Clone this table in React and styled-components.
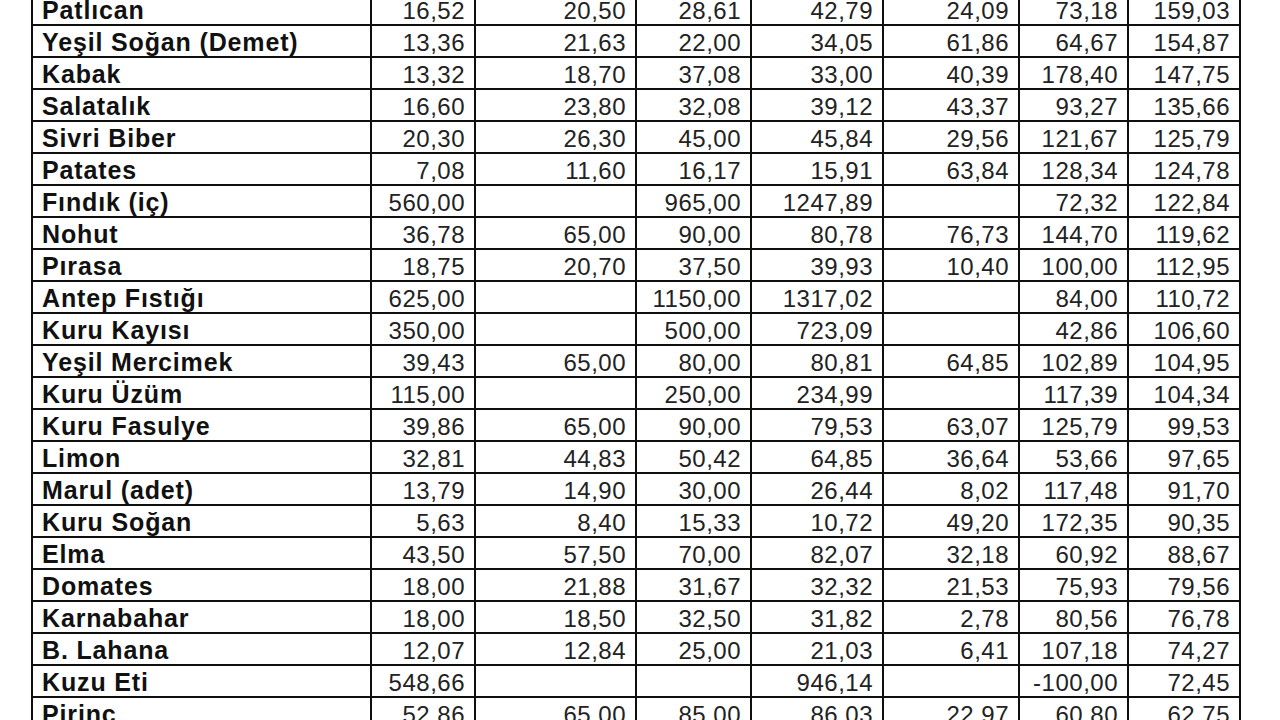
import React from "react";
import styled, { createGlobalStyle } from "styled-components";

const Global = createGlobalStyle`
  html, body { margin: 0; padding: 0; background: #ffffff; }
  body { font-family: "Liberation Sans", Arial, sans-serif; overflow: hidden; }
`;

const Page = styled.div`
  width: 1280px;
  height: 720px;
  overflow: hidden;
  background: #fff;
  padding-left: 31px;
  box-sizing: border-box;
`;

const Table = styled.table`
  margin-top: -8px;
  border-collapse: collapse;
  table-layout: fixed;
  width: 1210px;
  color: #1b1b1b;
`;

const Row = styled.tr`
  height: 32px;
`;

const Cell = styled.td`
  border: 2px solid #0f0f0f;
  padding: 3px 9px 0 9px;
  height: 27px;
  line-height: 27px;
  white-space: nowrap;
  overflow: hidden;
  box-sizing: content-box;
  font-family: "Liberation Sans", Arial, sans-serif;
  font-size: ${(p) => (p.$name ? "25px" : "24px")};
  font-weight: ${(p) => (p.$name ? 700 : 400)};
  letter-spacing: ${(p) => (p.$name ? "0.85px" : "0.5px")};
  text-align: ${(p) => (p.$name ? "left" : "right")};
  color: ${(p) => (p.$name ? "#111" : "#222")};
  vertical-align: top;
`;

const widths = [339, 104, 161, 115, 132, 136, 109, 112];

const rows = [
  ["Patlıcan", "16,52", "20,50", "28,61", "42,79", "24,09", "73,18", "159,03"],
  ["Yeşil Soğan (Demet)", "13,36", "21,63", "22,00", "34,05", "61,86", "64,67", "154,87"],
  ["Kabak", "13,32", "18,70", "37,08", "33,00", "40,39", "178,40", "147,75"],
  ["Salatalık", "16,60", "23,80", "32,08", "39,12", "43,37", "93,27", "135,66"],
  ["Sivri Biber", "20,30", "26,30", "45,00", "45,84", "29,56", "121,67", "125,79"],
  ["Patates", "7,08", "11,60", "16,17", "15,91", "63,84", "128,34", "124,78"],
  ["Fındık (iç)", "560,00", "", "965,00", "1247,89", "", "72,32", "122,84"],
  ["Nohut", "36,78", "65,00", "90,00", "80,78", "76,73", "144,70", "119,62"],
  ["Pırasa", "18,75", "20,70", "37,50", "39,93", "10,40", "100,00", "112,95"],
  ["Antep Fıstığı", "625,00", "", "1150,00", "1317,02", "", "84,00", "110,72"],
  ["Kuru Kayısı", "350,00", "", "500,00", "723,09", "", "42,86", "106,60"],
  ["Yeşil Mercimek", "39,43", "65,00", "80,00", "80,81", "64,85", "102,89", "104,95"],
  ["Kuru Üzüm", "115,00", "", "250,00", "234,99", "", "117,39", "104,34"],
  ["Kuru Fasulye", "39,86", "65,00", "90,00", "79,53", "63,07", "125,79", "99,53"],
  ["Limon", "32,81", "44,83", "50,42", "64,85", "36,64", "53,66", "97,65"],
  ["Marul (adet)", "13,79", "14,90", "30,00", "26,44", "8,02", "117,48", "91,70"],
  ["Kuru Soğan", "5,63", "8,40", "15,33", "10,72", "49,20", "172,35", "90,35"],
  ["Elma", "43,50", "57,50", "70,00", "82,07", "32,18", "60,92", "88,67"],
  ["Domates", "18,00", "21,88", "31,67", "32,32", "21,53", "75,93", "79,56"],
  ["Karnabahar", "18,00", "18,50", "32,50", "31,82", "2,78", "80,56", "76,78"],
  ["B. Lahana", "12,07", "12,84", "25,00", "21,03", "6,41", "107,18", "74,27"],
  ["Kuzu Eti", "548,66", "", "", "946,14", "", "-100,00", "72,45"],
  ["Pirinç", "52,86", "65,00", "85,00", "86,03", "22,97", "60,80", "62,75"],
];

export default function App() {
  return (
    <>
      <Global />
      <Page>
        <Table>
          <colgroup>
            {widths.map((w, i) => (
              <col key={i} style={{ width: w }} />
            ))}
          </colgroup>
          <tbody>
            {rows.map((r, i) => (
              <Row key={i}>
                {r.map((c, j) => (
                  <Cell key={j} $name={j === 0}>
                    {c}
                  </Cell>
                ))}
              </Row>
            ))}
          </tbody>
        </Table>
      </Page>
    </>
  );
}
